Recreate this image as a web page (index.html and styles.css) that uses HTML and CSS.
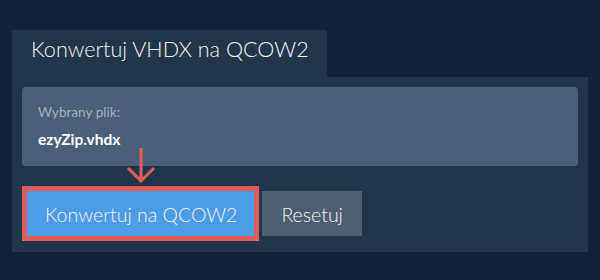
FILE: index.html
```html
<!DOCTYPE html>
<html>
<head>
<link rel="stylesheet" href="styles.css">
</head>
<body>
<div class="page">
  <div class="tab">Konwertuj VHDX na QCOW2</div>
  <div class="panel">
    <div class="file-box">
      <div class="file-label">Wybrany plik:</div>
      <div class="file-name">ezyZip.vhdx</div>
    </div>
    <svg class="arrow" width="30" height="36" viewBox="0 0 30 36">
      <path d="M15 1 V34 M2 21 L15 34 L28 21" fill="none" stroke="#e05e5a" stroke-width="3"/>
    </svg>
    <div class="actions">
      <button class="btn btn-convert">Konwertuj na QCOW2</button>
      <button class="btn btn-reset">Resetuj</button>
    </div>
  </div>
</div>
</body>
</html>
```

FILE: styles.css
```css
body {
  margin: 0;
  background: #10233a;
  font-family: Lato, "Open Sans", sans-serif;
  color: #f2f4f6;
}
.page {
  padding: 30px 12px 0 12px;
}
.tab {
  display: inline-block;
  background: #22364b;
  font-size: 21.6px;
  font-weight: 300;
  padding: 6px 18px 15px 19px;
}
.panel {
  position: relative;
  background: #22364b;
  padding: 10px 10px 16px 10px;
}
.file-box {
  background: #4a6079;
  border-radius: 4px;
  padding: 17px 16px 18px 16px;
}
.file-label {
  font-size: 13.6px;
  color: #a2afbe;
}
.file-name {
  font-size: 15.5px;
  font-weight: bold;
  color: #ffffff;
  margin-top: 10px;
}
.arrow {
  position: absolute;
  left: 114px;
  top: 70px;
}
.actions {
  display: flex;
  gap: 8px;
  margin-top: 25px;
  padding-left: 5px;
}
.btn {
  font-family: Lato, "Open Sans", sans-serif;
  font-size: 19.5px;
  font-weight: 300;
  color: #f2f4f6;
  border: none;
  height: 45px;
  line-height: 45px;
  padding: 1px 17px 0 18px;
  margin: 0;
}
.btn-convert {
  background: #4c9ce7;
  outline: 5px solid #e05e5a;
}
.btn-reset {
  background: #4e5f71;
  padding: 1px 19px 0 19px;
}
```
